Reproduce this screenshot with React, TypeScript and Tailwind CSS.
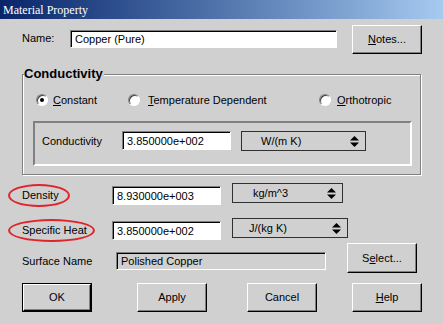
import React from 'react'

const font = { fontFamily: '"Liberation Sans", Arial, sans-serif' }

function Spin() {
  return (
    <svg width="9" height="11" viewBox="0 0 9 11" className="shrink-0">
      <polygon points="0,4.5 4.5,0 9,4.5" fill="#000" />
      <polygon points="0,6.5 4.5,11 9,6.5" fill="#000" />
    </svg>
  )
}

function TextBox({ value, w, h = 19, disabled = false }: { value: string; w: number; h?: number; disabled?: boolean }) {
  return (
    <div
      style={{ width: w, height: h }}
      className={`flex items-center pl-[4px] border border-t-[#808080] border-l-[#808080] border-r-white border-b-white shadow-[inset_1px_1px_0_#000] text-[11px] text-black leading-none whitespace-nowrap ${disabled ? 'bg-[#d0d0d0]' : 'bg-white'}`}
    >
      <span className="pt-[1px]">{value}</span>
    </div>
  )
}

function Unit({ label, w, indent }: { label: string; w: number; indent: number }) {
  return (
    <div style={{ width: w }} className="h-[20px] flex items-center border border-[#303030] bg-[#d0d0d0] pr-[6px]">
      <span style={{ marginLeft: indent }} className="text-[11px] text-black leading-none flex-1 whitespace-nowrap">{label}</span>
      <Spin />
    </div>
  )
}

function Btn({ children, h = 29, def = false }: { children: React.ReactNode; h?: number; def?: boolean }) {
  const inner = (
    <div
      style={{ height: def ? h - 2 : h }}
      className="w-full flex items-center justify-center border border-t-white border-l-white border-r-black border-b-black shadow-[inset_-1px_-1px_0_#808080] bg-[#d0d0d0] text-[11px] text-black leading-none whitespace-nowrap"
    >
      {children}
    </div>
  )
  if (def) return <div className="w-[70px] border border-black">{inner}</div>
  return <div className="w-[70px]">{inner}</div>
}

function Radio({ checked }: { checked?: boolean }) {
  return (
    <span className="w-[12px] h-[12px] rounded-full bg-white border border-t-[#808080] border-l-[#808080] border-r-white border-b-white shadow-[inset_1px_1px_0_#404040] flex items-center justify-center shrink-0">
      {checked && <span className="w-[4px] h-[4px] rounded-full bg-black" />}
    </span>
  )
}

function Circled({ children, w }: { children: React.ReactNode; w: number }) {
  return (
    <div className="relative w-[90px] h-[11px] text-[11px] leading-none whitespace-nowrap">
      {children}
      <span style={{ width: w }} className="absolute left-[-14px] top-[-6px] h-[23px] rounded-[50%] border-2 border-[#e0242c]" />
    </div>
  )
}

export default function App() {
  return (
    <div style={font} className="w-[443px] h-[324px] bg-[#d0d0d0] overflow-hidden text-black">
      <div className="h-[19px] bg-gradient-to-r from-[#0a246a] to-[#a6caf0] flex items-center pl-[3px]">
        <span style={{ fontFamily: '"Liberation Serif", "Times New Roman", serif' }} className="text-white text-[12px] leading-none">
          Material Property
        </span>
      </div>

      <div className="mt-[6px] h-[29px] flex items-center pl-[22px]">
        <span className="w-[48px] text-[11px] leading-none pb-[2px]">Name:</span>
        <div className="mb-[2px]">
          <TextBox value="Copper (Pure)" w={267} h={18} />
        </div>
        <div className="ml-[15px]">
          <Btn><span><u>N</u>otes...</span></Btn>
        </div>
      </div>

      <div className="relative mt-[20px] ml-[22px] w-[399px] h-[101px] border border-[#808080] shadow-[inset_1px_1px_0_#fff,1px_1px_0_#fff]">
        <span className="absolute left-[1px] top-[-8px] bg-[#d0d0d0] text-[13px] font-bold leading-none pr-[1px]">Conductivity</span>
        <div className="mt-[19px] h-[12px] flex items-center text-[11px] leading-none whitespace-nowrap">
          <div className="ml-[13px] w-[92px] flex items-center gap-[5px]">
            <Radio checked />
            <span><u>C</u>onstant</span>
          </div>
          <div className="w-[191px] flex items-center gap-[8px]">
            <Radio />
            <span><u>T</u>emperature Dependent</span>
          </div>
          <div className="flex items-center gap-[6px]">
            <Radio />
            <span><u>O</u>rthotropic</span>
          </div>
        </div>
        <div className="mt-[15px] ml-[10px] w-[379px] h-[45px] border-2 border-t-[#808080] border-l-[#808080] border-r-white border-b-white flex items-start pl-[7px]">
          <span className="mt-[13px] w-[80px] text-[11px] leading-none">Conductivity</span>
          <div className="mt-[8px]"><TextBox value="3.850000e+002" w={109} /></div>
          <div className="mt-[8px] ml-[10px]">
            <Unit label="W/(m K)" w={125} indent={19} />
          </div>
        </div>
      </div>

      <div className="mt-[8px] h-[23px] flex items-start pl-[22px]">
        <div className="mt-[7px]"><Circled w={62}>Density</Circled></div>
        <div className="mt-[3px]"><TextBox value="8.930000e+003" w={109} /></div>
        <div className="ml-[11px]"><Unit label="kg/m^3" w={111} indent={20} /></div>
      </div>

      <div className="mt-[12px] h-[23px] flex items-start pl-[22px]">
        <div className="mt-[7px]"><Circled w={87}>Specific Heat</Circled></div>
        <div className="mt-[3px]"><TextBox value="3.850000e+002" w={109} /></div>
        <div className="ml-[11px]"><Unit label="J/(kg K)" w={116} indent={16} /></div>
      </div>

      <div className="mt-[2px] h-[30px] flex items-start pl-[22px]">
        <span className="mt-[13px] w-[94px] text-[11px] leading-none">Surface Name</span>
        <div className="mt-[9px]"><TextBox value="Polished Copper" w={210} h={18} disabled /></div>
        <div className="ml-[21px]">
          <Btn h={30}><span>S<u>e</u>lect...</span></Btn>
        </div>
      </div>

      <div className="mt-[10px] flex items-start pl-[22px]">
        <Btn def>OK</Btn>
        <div className="ml-[45px]"><Btn>Apply</Btn></div>
        <div className="ml-[40px]"><Btn>Cancel</Btn></div>
        <div className="ml-[35px]"><Btn><span><u>H</u>elp</span></Btn></div>
      </div>
    </div>
  )
}
